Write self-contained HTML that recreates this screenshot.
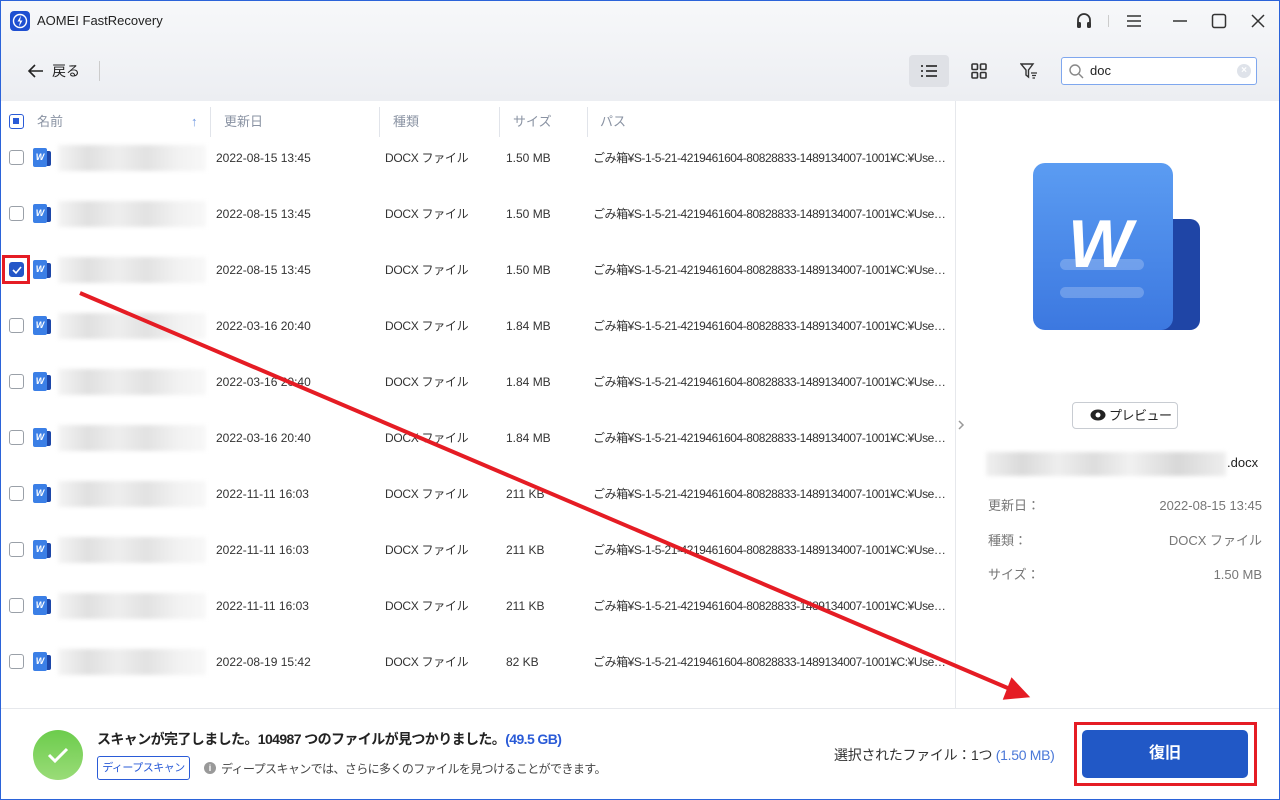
<!DOCTYPE html>
<html><head><meta charset="utf-8"><style>
*{box-sizing:border-box;margin:0;padding:0}
body{width:1280px;height:800px;overflow:hidden;font-family:"Liberation Sans","Noto Sans CJK JP",sans-serif;background:#fff;position:relative;color:#333;line-height:16px}
.frame{position:absolute;inset:0;border:1px solid #2b63d9;pointer-events:none;z-index:50}
.top{position:absolute;left:0;top:0;width:1280px;height:101px;background:linear-gradient(#f7f8fa,#eceef2)}
.abs{position:absolute;white-space:nowrap;line-height:16px}
.hdr{position:absolute;top:101px;left:0;width:955px;height:42px;font-size:13px;color:#8a93a3}
.hdr span{position:absolute;top:13px;line-height:16px}
.sep{position:absolute;top:6px;width:1px;height:30px;background:#e1e4ea}
.cb{position:absolute;left:9px;width:15px;height:15px;border:1px solid #9aa0a8;border-radius:3px;background:#fff}
.wi{position:absolute;left:33px;width:18px;height:19px}
.blur{position:absolute;left:58px;width:148px;height:26px;background:linear-gradient(90deg,#f4f4f4,#e0e0e0 20%,#eee 40%,#e2e2e2 60%,#f1f1f1 80%,#f8f8f8);filter:blur(2px)}
.right{position:absolute;left:955px;top:101px;width:325px;height:607px;border-left:1px solid #e6e8ec}
.bottom{position:absolute;left:0;top:708px;width:1280px;height:92px;border-top:1px solid #e6e8ec;background:#fff}
.c{font-size:12px}
</style></head><body>
<div class="top"></div>
<div class="abs" style="left:10px;top:11px;width:20px;height:20px;border-radius:4px;background:#1e4fd1"><svg width="20" height="20" viewBox="0 0 20 20"><circle cx="10" cy="10" r="6.5" fill="none" stroke="#fff" stroke-width="1.4"/><path d="M11 4.5L7.5 10.5H10L9 15.5L12.5 9.5H10Z" fill="#fff"/></svg></div>
<div class="abs" style="left:37px;top:13px;font-size:13px;color:#222">AOMEI FastRecovery</div>
<svg class="abs" style="left:1074px;top:11px" width="20" height="20" viewBox="0 0 20 20"><path d="M4 12V9a6 6 0 0 1 12 0v3" fill="none" stroke="#333" stroke-width="1.8"/><rect x="3" y="11" width="4" height="6" rx="1.5" fill="#333"/><rect x="13" y="11" width="4" height="6" rx="1.5" fill="#333"/></svg>
<div class="abs" style="left:1108px;top:15px;width:1px;height:12px;background:#ccc"></div>
<svg class="abs" style="left:1126px;top:13px" width="16" height="16"><path d="M1 3H15M1 8H15M1 13H15" stroke="#333" stroke-width="1.5"/></svg>
<svg class="abs" style="left:1172px;top:13px" width="16" height="16"><path d="M1 8H15" stroke="#333" stroke-width="1.5"/></svg>
<svg class="abs" style="left:1211px;top:13px" width="16" height="16"><rect x="1.5" y="1.5" width="13" height="13" rx="2" fill="none" stroke="#333" stroke-width="1.5"/></svg>
<svg class="abs" style="left:1250px;top:13px" width="16" height="16"><path d="M2 2L14 14M14 2L2 14" stroke="#333" stroke-width="1.5"/></svg>
<svg class="abs" style="left:27px;top:63px" width="18" height="16"><path d="M16 8H2M8 2L2 8L8 14" fill="none" stroke="#222" stroke-width="1.6"/></svg>
<div class="abs" style="left:52px;top:63px;font-size:14px;color:#222">戻る</div>
<div class="abs" style="left:99px;top:61px;width:1px;height:20px;background:#ccc"></div>
<div class="abs" style="left:909px;top:55px;width:40px;height:32px;border-radius:4px;background:#dfe1e6"></div>
<svg class="abs" style="left:920px;top:63px" width="18" height="16"><path d="M1 3H3M6 3H17M1 8H3M6 8H17M1 13H3M6 13H17" stroke="#333" stroke-width="1.8"/></svg>
<svg class="abs" style="left:971px;top:63px" width="16" height="16"><g fill="none" stroke="#333" stroke-width="1.6"><rect x="1" y="1" width="5.5" height="5.5" rx="1"/><rect x="9.5" y="1" width="5.5" height="5.5" rx="1"/><rect x="1" y="9.5" width="5.5" height="5.5" rx="1"/><rect x="9.5" y="9.5" width="5.5" height="5.5" rx="1"/></g></svg>
<svg class="abs" style="left:1020px;top:63px" width="18" height="16"><path d="M1 1H13L8.5 7V14L6 12V7Z" fill="none" stroke="#333" stroke-width="1.4"/><path d="M11 10H17M12 12.5H16M12.5 15H15" stroke="#333" stroke-width="1.2"/></svg>
<div class="abs" style="left:1061px;top:57px;width:196px;height:28px;background:#fff;border:1px solid #7fa7ee;border-radius:3px"></div>
<svg class="abs" style="left:1069px;top:64px" width="15" height="15"><circle cx="6" cy="6" r="5" fill="none" stroke="#888" stroke-width="1.4"/><path d="M10 10L14 14" stroke="#888" stroke-width="1.4"/></svg>
<div class="abs" style="left:1090px;top:63px;font-size:13px;color:#222">doc</div>
<div class="abs" style="left:1237px;top:64px;width:14px;height:14px;border-radius:50%;background:#dfe3ea;color:#fff;font-size:10px;text-align:center;line-height:14px;font-weight:bold">×</div>
<div class="hdr">
<div class="abs" style="left:9px;top:13px;width:15px;height:15px;border:1.5px solid #2a5bd7;border-radius:3px"><div style="position:absolute;left:3px;top:3px;width:6px;height:6px;background:#2a5bd7"></div></div>
<span style="left:37px">名前</span><span style="left:191px;color:#6c95e0">↑</span>
<div class="sep" style="left:210px"></div><span style="left:224px">更新日</span>
<div class="sep" style="left:379px"></div><span style="left:393px">種類</span>
<div class="sep" style="left:499px"></div><span style="left:513px">サイズ</span>
<div class="sep" style="left:587px"></div><span style="left:600px">パス</span>
</div>
<div id="rows"></div>
<script>
var d=[["2022-08-15 13:45","1.50 MB"],["2022-08-15 13:45","1.50 MB"],["2022-08-15 13:45","1.50 MB"],["2022-03-16 20:40","1.84 MB"],["2022-03-16 20:40","1.84 MB"],["2022-03-16 20:40","1.84 MB"],["2022-11-11 16:03","211 KB"],["2022-11-11 16:03","211 KB"],["2022-11-11 16:03","211 KB"],["2022-08-19 15:42","82 KB"]];
var h="";d.forEach(function(r,i){var y=158+56*i;var cb=i==2?'<div class="cb" style="top:'+(y-8)+'px;background:#2456c8;border-color:#2456c8"><svg width="13" height="13" style="position:absolute;left:0;top:0"><path d="M3 7L6 10L11 4" fill="none" stroke="#fff" stroke-width="1.6"/></svg></div><div class="abs" style="left:2px;top:'+(y-15)+'px;width:28px;height:29px;border:3px solid #e51c24"></div>':'<div class="cb" style="top:'+(y-8)+'px"></div>';
var t=y-8;
h+=cb+'<div class="wi" style="top:'+(y-10)+'px"><div style="position:absolute;right:0;top:3px;width:8px;height:15px;background:#1d47a8;border-radius:0 2px 2px 0"></div><div style="position:absolute;left:0;top:0;width:14px;height:19px;background:#3b7fe6;border-radius:2px;color:#fff;font-size:9px;font-weight:bold;text-align:center;line-height:19px;font-style:italic">W</div></div><div class="blur" style="top:'+(y-13)+'px"></div><div class="abs c" style="top:'+t+'px;left:216px">'+r[0]+'</div><div class="abs c" style="top:'+t+'px;left:385px;letter-spacing:-0.3px">DOCX ファイル</div><div class="abs c" style="top:'+t+'px;left:506px">'+r[1]+'</div><div class="abs c" style="top:'+t+'px;left:593px;width:356px;overflow:hidden;text-overflow:ellipsis;letter-spacing:-0.45px">ごみ箱¥S-1-5-21-4219461604-80828833-1489134007-1001¥C:¥Users...</div>';});
document.getElementById("rows").innerHTML=h;
</script>
<div class="right"></div>
<div class="abs" style="left:1140px;top:219px;width:60px;height:111px;background:#1f45a6;border-radius:0 10px 10px 0"></div>
<div class="abs" style="left:1033px;top:163px;width:140px;height:167px;border-radius:12px;background:linear-gradient(#5b9cf2,#3c78e0)"></div>
<div class="abs" style="left:1060px;top:259px;width:84px;height:11px;border-radius:6px;background:rgba(255,255,255,.22)"></div>
<div class="abs" style="left:1060px;top:287px;width:84px;height:11px;border-radius:6px;background:rgba(255,255,255,.22)"></div>
<div class="abs" style="left:1068px;top:210px;font-size:68px;font-weight:bold;font-style:italic;color:#fff;line-height:68px">W</div>
<svg class="abs" style="left:956px;top:419px" width="10" height="12"><path d="M3 2L7 6L3 10" fill="none" stroke="#999" stroke-width="1.5"/></svg>
<div class="abs" style="left:1072px;top:402px;width:106px;height:27px;border:1px solid #c8ccd2;border-radius:4px;background:#fff"></div>
<svg class="abs" style="left:1090px;top:409px" width="16" height="12"><ellipse cx="8" cy="6" rx="7.5" ry="5.5" fill="#222"/><circle cx="8" cy="6" r="2.5" fill="#fff"/></svg>
<div class="abs" style="left:1109px;top:408px;font-size:13px;color:#222;letter-spacing:-0.5px">プレビュー</div>
<div class="abs" style="left:986px;top:452px;width:240px;height:24px;background:linear-gradient(90deg,#f0f0f0,#dadada 15%,#eee 30%,#ddd 45%,#f1f1f1 60%,#d8d8d8 80%,#eee);filter:blur(2px)"></div>
<div class="abs" style="left:1227px;top:455px;font-size:13px;color:#222">.docx</div>
<div class="abs" style="left:988px;top:498px;font-size:13px;color:#777">更新日：</div>
<div class="abs" style="right:18px;top:498px;font-size:13px;color:#777">2022-08-15 13:45</div>
<div class="abs" style="left:988px;top:533px;font-size:13px;color:#777">種類：</div>
<div class="abs" style="right:18px;top:533px;font-size:13px;color:#777">DOCX ファイル</div>
<div class="abs" style="left:988px;top:567px;font-size:13px;color:#777">サイズ：</div>
<div class="abs" style="right:18px;top:567px;font-size:13px;color:#777">1.50 MB</div>
<div class="bottom"></div>
<div class="abs" style="left:33px;top:730px;width:50px;height:50px;border-radius:50%;background:linear-gradient(#6ccc4c,#9adc78)"><svg width="50" height="50"><path d="M16 25L22 31L34 19" fill="none" stroke="#fff" stroke-width="3"/></svg></div>
<div class="abs" style="left:97px;top:731px;font-size:14px;font-weight:bold;color:#222;letter-spacing:-0.6px">スキャンが完了しました。104987 つのファイルが見つかりました。<span style="color:#2a5bd7">(49.5 GB)</span></div>
<div class="abs" style="left:97px;top:756px;width:93px;height:24px;border:1px solid #2a5bd7;border-radius:3px;font-size:11px;color:#2a5bd7;text-align:center;line-height:22px;letter-spacing:-0.5px">ディープスキャン</div>
<div class="abs" style="left:204px;top:762px;width:12px;height:12px;border-radius:50%;background:#999;color:#fff;font-size:9px;text-align:center;line-height:12px;font-weight:bold">i</div>
<div class="abs" style="left:221px;top:761px;font-size:12px;color:#444;letter-spacing:-0.6px">ディープスキャンでは、さらに多くのファイルを見つけることができます。</div>
<div class="abs" style="left:834px;top:747px;font-size:14px;color:#333;letter-spacing:-0.3px">選択されたファイル：1つ <span style="color:#4a78d8">(1.50 MB)</span></div>
<div class="abs" style="left:1074px;top:722px;width:183px;height:64px;border:3px solid #e51c24"></div>
<div class="abs" style="left:1082px;top:730px;width:166px;height:48px;border-radius:5px;background:#2158c6;color:#fff;font-size:16px;font-weight:bold;text-align:center;line-height:48px">復旧</div>
<svg class="abs" style="left:0;top:0;z-index:40" width="1280" height="800"><line x1="80" y1="293" x2="1010" y2="689" stroke="#e51c24" stroke-width="4"/><path d="M1027 696L1005 698L1012 680Z" fill="#e51c24" stroke="#e51c24" stroke-width="3"/></svg>
<div class="frame"></div>
</body></html>
